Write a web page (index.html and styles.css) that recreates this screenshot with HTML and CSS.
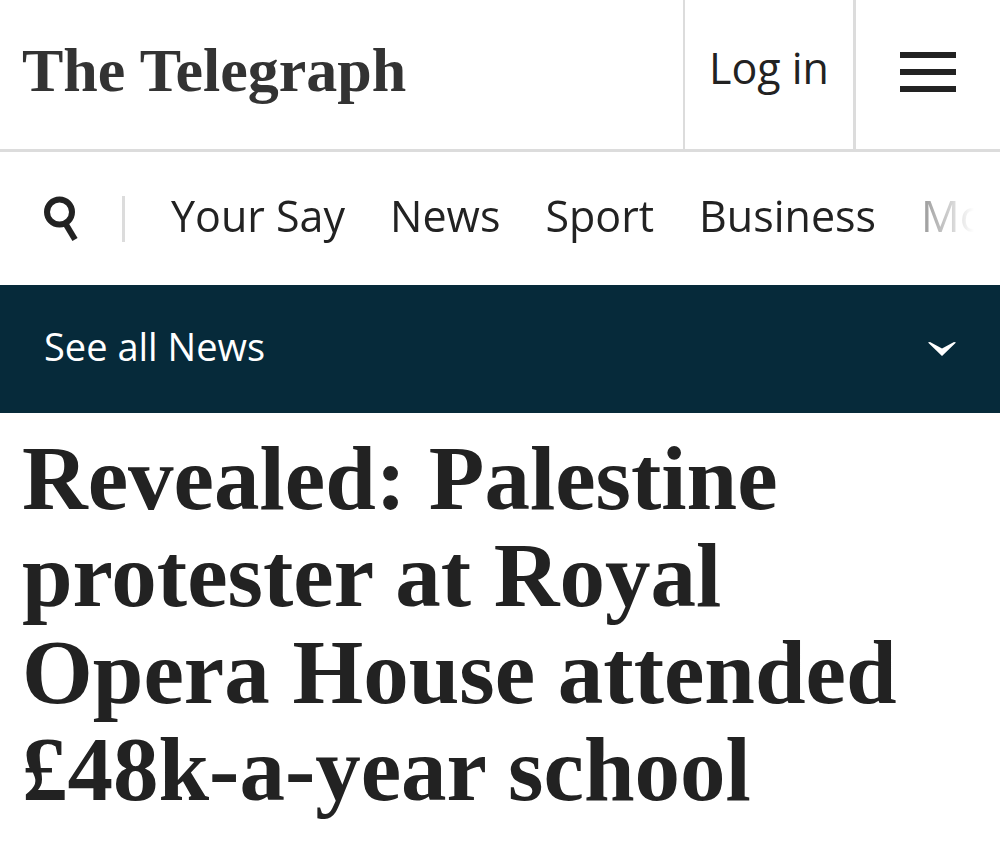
FILE: index.html
```html
<!DOCTYPE html>
<html lang="en">
<head>
  <meta charset="UTF-8">
  <meta name="viewport" content="width=device-width, initial-scale=1.0">
  <title>Revealed: Palestine protester at Royal Opera House attended £48k-a-year school</title>
  <link rel="stylesheet" href="styles.css">
</head>
<body>
  <!-- Site header -->
  <header class="header">
    <a class="logo" href="#">The Telegraph</a>
    <a class="login" href="#">Log in</a>
    <button class="menu-button" type="button" aria-label="Menu">
      <span class="menu-line"></span>
      <span class="menu-line"></span>
      <span class="menu-line"></span>
    </button>
  </header>

  <!-- Main navigation -->
  <nav class="nav">
    <button class="search-button" type="button" aria-label="Search">
      <svg width="36" height="46" viewBox="0 0 36 46" fill="none" stroke="#222" stroke-width="6">
        <circle cx="15.500" cy="16" r="12.500"/>
        <path d="M20.500 26L31 43.500"/>
      </svg>
    </button>
    <div class="nav-links">
      <a href="#">Your Say</a>
      <a href="#">News</a>
      <a href="#">Sport</a>
      <a href="#">Business</a>
      <a href="#">Money</a>
    </div>
  </nav>

  <!-- Section menu -->
  <button class="section-bar" type="button">
    See all News
    <svg width="28" height="14" viewBox="0 0 28 14" fill="#fff">
      <path d="M0 0.500L2 0L14 6.500L26 0L28 0.500L14 14Z"/>
    </svg>
  </button>

  <main class="article">
    <h1 class="headline">Revealed: Palestine protester at Royal Opera House attended £48k-a-year school</h1>
  </main>
</body>
</html>
```

FILE: styles.css
```css
body {
  margin: 0;
  font-family: 'Open Sans', 'Noto Sans', sans-serif;
  background: #fff;
  color: #222;
}

a {
  color: inherit;
  text-decoration: none;
}

button {
  margin: 0;
  border: none;
  background: none;
  color: inherit;
  font-family: inherit;
  cursor: pointer;
}

.header {
  display: flex;
  height: 149px;
  border-bottom: 3px solid #dcdcdc;
}

.logo {
  flex-grow: 1;
  padding: 36px 0 0 22px;
  font-family: 'Old English Text MT', 'Liberation Serif', serif;
  font-size: 62px;
  font-weight: bold;
  line-height: 68px;
  color: #333;
}

.login {
  padding: 38px 24px 0;
  border-left: 2px solid #dcdcdc;
  font-size: 43px;
  font-weight: 500;
  line-height: 60px;
}

.menu-button {
  display: flex;
  flex-direction: column;
  gap: 11px;
  padding: 52px 44px 0;
  border-left: 3px solid #dcdcdc;
}

.menu-line {
  width: 56px;
  height: 6px;
  background: #222;
}

.nav {
  display: flex;
  align-items: center;
  height: 133px;
  padding-left: 44px;
}

.search-button {
  display: flex;
  padding: 0 42px 0 0;
  border-right: 3px solid #dcdcdc;
}

.nav-links {
  display: flex;
  flex: 1;
  gap: 45px;
  padding: 0 0 6px 46px;
  overflow: hidden;
  white-space: nowrap;
  font-size: 43px;
  font-weight: 500;
  line-height: 60px;
  /* fade out the links that run off the right edge */
  mask-image: linear-gradient(to left, transparent 26px, rgba(0, 0, 0, 0.4) 72px, #000 116px);
}

.section-bar {
  display: flex;
  align-items: center;
  justify-content: space-between;
  width: 100%;
  height: 128px;
  padding: 0 44px 6px;
  background: #062a3a;
  color: #fff;
  font-size: 38px;
  font-weight: 500;
}

.section-bar svg {
  margin-top: 6px;
}

.article {
  padding: 17px 80px 20px 22px;
}

.headline {
  margin: 0;
  font-family: 'Liberation Serif', serif;
  font-size: 91px;
  font-weight: bold;
  line-height: 97px;
}
```
